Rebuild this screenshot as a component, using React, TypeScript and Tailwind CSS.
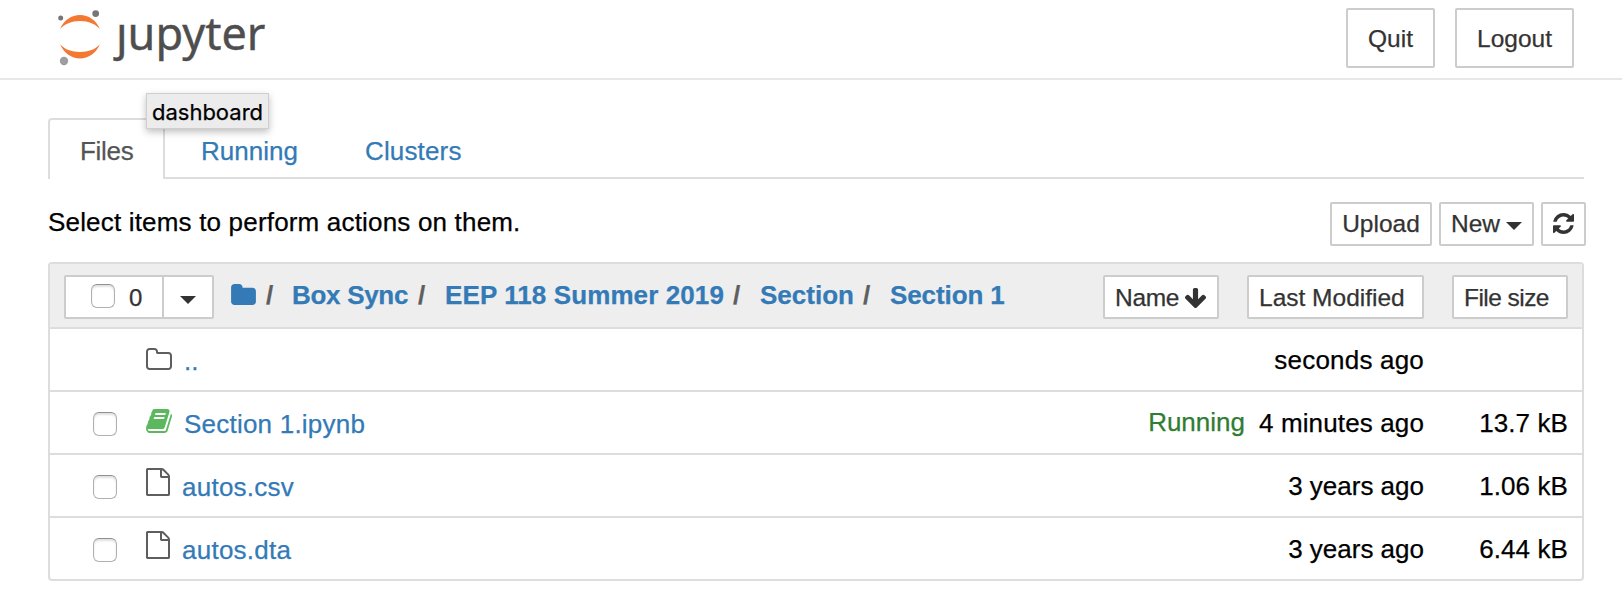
import type { ReactNode } from "react";

const PATHS = {
  refresh:
    "M1511 928q0 5-1 7-64 268-268 434.5t-478 166.5q-146 0-282.5-55t-243.5-157l-129 129q-19 19-45 19t-45-19-19-45v-448q0-26 19-45t45-19h448q26 0 45 19t19 45-19 45l-137 137q71 66 161 102t187 36q134 0 250-65t186-179q11-17 53-117 8-23 30-23h192q13 0 22.5 9.5t9.5 22.5zm25-800v448q0 26-19 45t-45 19h-448q-26 0-45-19t-19-45 19-45l138-138q-148-137-349-137-134 0-250 65t-186 179q-11 17-53 117-8 23-30 23h-199q-13 0-22.5-9.5t-9.5-22.5v-7q65-268 270-434.5t480-166.5q146 0 284 55.5t245 156.5l130-129q19-19 45-19t45 19 19 45z",
  folder:
    "M1728 608v704q0 92-66 158t-158 66h-1216q-92 0-158-66t-66-158v-960q0-92 66-158t158-66h320q92 0 158 66t66 158v32h672q92 0 158 66t66 158z",
  folderOpenLine:
    "M1600 1312v-704q0-40-28-68t-68-28h-704q-40 0-68-28t-28-68v-64q0-40-28-68t-68-28h-320q-40 0-68 28t-28 68v960q0 40 28 68t68 28h1216q40 0 68-28t28-68zm128-704v704q0 92-66 158t-158 66h-1216q-92 0-158-66t-66-158v-960q0-92 66-158t158-66h320q92 0 158 66t66 158v32h672q92 0 158 66t66 158z",
  book:
    "M1703 478q40 57 18 129l-275 906q-19 64-76.5 107.5t-122.5 43.5h-923q-77 0-148.5-53.5t-99.5-131.5q-24-67-2-127 0-4 3-27t4-37q1-8-3-21.5t-3-19.5q2-11 8-21t16.5-23.5 16.5-23.5q23-38 45-91.5t30-91.5q3-10 .5-30t-.5-28q3-11 17-28t17-23q21-36 42-92t25-90q1-9-2.5-32t.5-28q4-13 22-30.5t22-22.5q19-26 42.5-84.5t27.5-96.5q1-8-3-25.5t-2-26.5q2-8 9-18t18-23 17-21q8-12 16.5-30.5t15-35 16-36 19.5-32 26.5-23.5 36-11.5 47.5 5.500l-1 3q38-9 51-9h761q74 0 114 56t18 130l-274 906q-36 119-71.5 153.5t-128.5 34.5h-869q-27 0-38 15-11 16-1 43 24 70 144 70h923q29 0 56-15.5t35-41.5l300-987q7-22 5-57 38 15 59 43zm-1064 2q-4 13 2 22.5t20 9.5h608q13 0 25.5-9.5t16.5-22.5l21-64q4-13-2-22.5t-20-9.5h-608q-13 0-25.5 9.5t-16.5 22.5zm-83 256q-4 13 2 22.5t20 9.5h608q13 0 25.5-9.5t16.5-22.5l21-64q4-13-2-22.5t-20-9.5h-608q-13 0-25.5 9.5t-16.5 22.5z",
  file:
    "M1596 380q28 28 48 76t20 88v1152q0 40-28 68t-68 28h-1344q-40 0-68-28t-28-68v-1600q0-40 28-68t68-28h896q40 0 88 20t76 48zm-444-244v376h376q-10-29-22-41l-313-313q-12-12-41-22zm384 1528v-1024h-416q-40 0-68-28t-28-68v-416h-768v1536h1280z",
  arrowDown:
    "M1675 832q0 53-37 90l-651 652q-39 37-91 37-53 0-90-37l-651-652q-38-36-38-90 0-53 38-91l74-75q39-37 91-37 53 0 90 37l294 294v-704q0-52 38-90t90-38h128q52 0 90 38t38 90v704l294-294q37-37 90-37 52 0 91 37l75 75q37 39 37 91z",
};

function Icon({ d, box, className }: { d: string; box: string; className: string }) {
  return (
    <svg viewBox={box} className={`shrink-0 fill-current ${className}`} aria-hidden="true">
      <path d={d} />
    </svg>
  );
}

function Caret({ className = "" }: { className?: string }) {
  return (
    <svg viewBox="0 0 16 8" className={`h-2 w-4 shrink-0 fill-current ${className}`} aria-hidden="true">
      <path d="M0 0h16L8 8z" />
    </svg>
  );
}

function Button({ className, children }: { className: string; children: ReactNode }) {
  return (
    <button
      className={`flex shrink-0 items-center whitespace-nowrap rounded-[2px] border-2 border-[#ccc] bg-white text-[24.5px] leading-[36px] text-[#333] ${className}`}
    >
      {children}
    </button>
  );
}

function Checkbox({ className = "" }: { className?: string }) {
  return (
    <span
      className={`size-6 shrink-0 rounded-[6px] border border-[#b0b0b0] border-t-[#8f8f8f] bg-white shadow-[inset_0_2px_2px_rgba(0,0,0,0.12)] ${className}`}
    />
  );
}

function Logo() {
  return (
    <a className="flex h-[78px] w-[216px]">
      <svg viewBox="56 0 50 78" className="h-[78px] w-[50px] shrink-0" aria-hidden="true">
        <path d="M60 29C64 20 71.500 15 80 15s16 5 20 14c-4.500-5-11.500-8-20-8s-15.500 3-20 8z" fill="#f37933" />
        <path d="M60 44.200c4 9 11.500 14.200 20 14.200s16-5.200 20-14.200c-4.500 5-11.500 7.700-20 7.700s-15.500-2.700-20-7.700z" fill="#f37933" />
        <circle cx="60.700" cy="18" r="2.500" fill="#767677" />
        <circle cx="95.700" cy="13.600" r="3.400" fill="#767677" />
        <circle cx="64" cy="61" r="4.200" fill="#9e9e9e" />
      </svg>
      <span className="ml-[10px] whitespace-nowrap font-['Noto_Sans',sans-serif] text-[45px] leading-[65px] text-[#4e4e4e] [-webkit-text-stroke:0.4px_#4e4e4e]">
        ȷupyter
      </span>
    </a>
  );
}

type Item = {
  name: string;
  icon: ReactNode;
  nameClass: string;
  check: boolean;
  modified: string;
  modifiedClass: string;
  size: string;
  running?: boolean;
};

const FILE_ICON = <Icon d={PATHS.file} box="128 0 1536 1792" className="mt-[13px] h-7 w-6 text-[#5e5e5e]" />;

const ITEMS: Item[] = [
  {
    name: "..",
    icon: <Icon d={PATHS.folderOpenLine} box="64 128 1664 1408" className="mt-[19px] h-[22px] w-[26px] text-[#5e5e5e]" />,
    nameClass: "ml-[12px]",
    check: false,
    modified: "seconds ago",
    modifiedClass: "tracking-[0.2px]",
    size: "",
  },
  {
    name: "Section 1.ipynb",
    icon: <Icon d={PATHS.book} box="64 128 1664 1536" className="mt-[17px] h-6 w-[26px] text-[#5cb85c]" />,
    nameClass: "ml-[12px] tracking-[0.22px]",
    check: true,
    modified: "4 minutes ago",
    modifiedClass: "tracking-[0.13px]",
    size: "13.7 kB",
    running: true,
  },
  {
    name: "autos.csv",
    icon: FILE_ICON,
    nameClass: "ml-[12px] tracking-[0.25px]",
    check: true,
    modified: "3 years ago",
    modifiedClass: "",
    size: "1.06 kB",
  },
  {
    name: "autos.dta",
    icon: FILE_ICON,
    nameClass: "ml-[12px] tracking-[0.25px]",
    check: true,
    modified: "3 years ago",
    modifiedClass: "",
    size: "6.44 kB",
  },
];

function Row({ item }: { item: Item }) {
  return (
    <div className="flex h-[63px] items-start border-b-2 border-[#ddd] text-[26px] leading-[30px] last:border-b-0">
      <div className="flex w-[96px] pl-[43px] pt-5">{item.check && <Checkbox />}</div>
      {item.icon}
      <a className={`mt-[17px] text-[#337ab7] ${item.nameClass}`}>{item.name}</a>
      <div className="ml-auto flex">
        {item.running && <span className="mr-[14px] mt-[15px] text-[#2f7d32]">Running</span>}
        <span className={`mt-4 text-black ${item.modifiedClass}`}>{item.modified}</span>
        <span className="mr-[14px] mt-4 w-[144px] text-right tracking-[0.1px] text-black">{item.size}</span>
      </div>
    </div>
  );
}

function Crumb({ label, className }: { label: string; className: string }) {
  return (
    <>
      <span className="w-[11px] font-bold text-[#5e5e5e]">/</span>
      <a className={`shrink-0 whitespace-nowrap font-bold text-[#337ab7] ${className}`}>{label}</a>
    </>
  );
}

export default function App() {
  return (
    <div className="h-[608px] w-[1622px] overflow-hidden bg-white font-['Liberation_Sans',Arial,sans-serif] text-black [-webkit-text-stroke:0.25px_currentColor]">
      <header className="relative flex h-20 items-start border-b-2 border-[#e7e7e7] pl-[56px] pr-[48px]">
        <Logo />
        <div className="ml-auto flex gap-5 pt-2">
          <Button className="h-[60px] w-[89px] justify-center pt-[2px]">Quit</Button>
          <Button className="h-[60px] w-[119px] justify-center pt-[2px]">Logout</Button>
        </div>
        <div className="absolute left-[146px] top-[93px] z-10 flex h-9 w-[123px] items-center justify-center border border-[#cfcfcf] bg-[#ececec] pt-[2px] font-[Inter,sans-serif] text-[22px] leading-none text-black shadow-[0_3px_7px_rgba(0,0,0,0.25)]">
          dashboard
        </div>
      </header>

      <main className="pl-12 pr-[38px] pt-[38px]">
        <nav className="flex h-[61px] text-[26px] leading-[30px]">
          <a className="h-[61px] w-[117px] rounded-t-[4px] border-2 border-b-0 border-[#ddd] pl-[30px] pt-[16px] tracking-[-0.3px] text-[#555]">
            Files
          </a>
          <div className="flex flex-1 border-b-2 border-[#ddd] pt-[18px] text-[#337ab7]">
            <a className="ml-[36px] w-[164px]">Running</a>
            <a className="tracking-[0.15px]">Clusters</a>
          </div>
        </nav>

        <div className="-mr-[2px] flex h-[83px] items-start pt-[23px]">
          <p className="mt-[5px] text-[26px] leading-[30px] tracking-[0.18px]">Select items to perform actions on them.</p>
          <div className="ml-auto flex gap-[7px]">
            <Button className="h-11 w-[102px] justify-center">Upload</Button>
            <Button className="h-11 w-[95px] pl-[10px]">
              New
              <Caret className="ml-[6px] mt-[3px]" />
            </Button>
            <Button className="h-11 w-[45px] justify-center">
              <Icon d={PATHS.refresh} box="0 0 1536 1536" className="mb-px size-[21px]" />
            </Button>
          </div>
        </div>

        <section className="h-[319px] rounded-[4px] border-2 border-[#ddd]">
          <div className="flex h-[65px] items-start border-b-2 border-[#ddd] bg-[#eee] pl-[14px] pr-[14px]">
            <div className="mt-[11px] flex h-11 w-[150px] shrink-0 rounded-[2px] border-2 border-[#ccc] bg-white text-2xl text-[#333]">
              <div className="flex w-[98px] items-start border-r-2 border-[#ccc] pl-[25px]">
                <Checkbox className="mt-[7px]" />
                <span className="ml-[14px] mt-[2px] leading-[38px]">0</span>
              </div>
              <div className="flex flex-1 justify-center pt-[19px]">
                <Caret />
              </div>
            </div>
            <div className="ml-[17px] mt-4 flex text-[26px] leading-[30px]">
              <Icon d={PATHS.folder} box="64 128 1664 1408" className="mr-[10px] mt-1 h-[21px] w-[25px] text-[#337ab7]" />
              <Crumb label="Box Sync" className="ml-[15px] w-[126px] tracking-[-0.3px]" />
              <Crumb label="EEP 118 Summer 2019" className="ml-[16px] w-[288px] tracking-[0.1px]" />
              <Crumb label="Section" className="ml-[16px] w-[103px]" />
              <Crumb label="Section 1" className="ml-[16px] w-[120px] tracking-[-0.1px]" />
            </div>
            <div className="ml-auto mt-[11px] flex">
              <Button className="h-11 w-[116px] pl-[10px] pt-px">
                <span className="tracking-[-0.3px]">Name</span>
                <Icon d={PATHS.arrowDown} box="117 128 1558 1483" className="ml-[6px] h-5 w-[21px]" />
              </Button>
              <Button className="ml-[28px] h-11 w-[177px] pl-[10px] pt-px">Last Modified</Button>
              <Button className="ml-[28px] h-11 w-[116px] pl-[10px] pt-px tracking-[-0.55px]">File size</Button>
            </div>
          </div>
          {ITEMS.map((item) => (
            <Row key={item.name} item={item} />
          ))}
        </section>
      </main>
    </div>
  );
}
